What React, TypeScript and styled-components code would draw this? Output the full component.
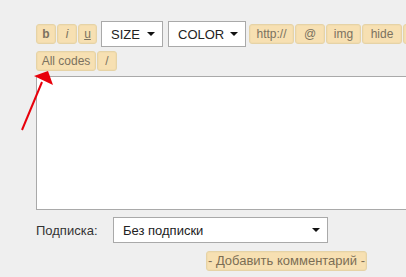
import React from 'react'
import styled, { createGlobalStyle } from 'styled-components'

const GlobalStyle = createGlobalStyle`
  html, body {
    margin: 0;
    padding: 0;
    background: #efefef;
    overflow: hidden;
  }
  body {
    font-family: "Liberation Sans", Arial, sans-serif;
  }
`

const Page = styled.div`
  position: relative;
  width: 406px;
  height: 277px;
  padding: 21px 0 0 36px;
  box-sizing: border-box;
  overflow: hidden;
`

const Toolbar = styled.div`
  display: flex;
  align-items: center;
  gap: 1px;
  width: 420px;
  height: 26px;
`

const CodesRow = styled.div`
  display: flex;
  align-items: center;
  gap: 1px;
  margin-top: 4px;
`

const TagButton = styled.button<{ $w: number; $bold?: boolean; $italic?: boolean; $under?: boolean }>`
  width: ${({ $w }) => $w}px;
  height: 20px;
  flex: none;
  padding: 0;
  background: #f7e0b2;
  border: 1px solid #e6d3a6;
  box-shadow: inset 0 0 0 1px #f2dcae;
  border-radius: 3px;
  color: #7b7260;
  font-family: "Liberation Sans", Arial, sans-serif;
  font-size: 12px;
  line-height: 18px;
  font-weight: ${({ $bold }) => ($bold ? 'bold' : 'normal')};
  font-style: ${({ $italic }) => ($italic ? 'italic' : 'normal')};
  text-decoration: ${({ $under }) => ($under ? 'underline' : 'none')};
  text-align: center;
  cursor: pointer;
`

const FakeSelect = styled.div<{ $w: number; $ml?: number }>`
  width: ${({ $w }) => $w}px;
  height: 26px;
  flex: none;
  margin: 0 2px 0 ${({ $ml }) => $ml ?? 3}px;
  box-sizing: border-box;
  background: #fff;
  border: 1px solid #a9a9a9;
  display: flex;
  align-items: center;
  justify-content: space-between;
  padding: 0 7px 0 9px;
  color: #222;
  font-size: 13px;
`

const Caret = styled.span`
  width: 0;
  height: 0;
  border-left: 4px solid transparent;
  border-right: 4px solid transparent;
  border-top: 4px solid #111;
`

const TextArea = styled.textarea`
  display: block;
  width: 420px;
  height: 134px;
  margin-top: 5px;
  box-sizing: border-box;
  background: #fff;
  border: 1px solid #a9a9a9;
  resize: none;
  outline: none;
`

const SubscribeRow = styled.div`
  display: flex;
  align-items: center;
  margin-top: 7px;
`

const Label = styled.span`
  width: 77px;
  color: #333;
  font-size: 13px;
`

const SubmitRow = styled.div`
  display: flex;
  padding-left: 170px;
  margin-top: 8px;
`

const SubmitButton = styled.button`
  width: 161px;
  height: 20px;
  padding: 0;
  background: #f7e0b2;
  border: 1px solid #e6d3a6;
  box-shadow: inset 0 0 0 1px #f2dcae;
  border-radius: 3px;
  color: #7b6e55;
  font-family: "Liberation Sans", Arial, sans-serif;
  font-size: 13px;
  line-height: 18px;
  cursor: pointer;
`

const Pointer = styled.svg`
  position: absolute;
  left: 0;
  top: 0;
  pointer-events: none;
`

export default function App() {
  return (
    <Page>
      <GlobalStyle />
      <Toolbar>
        <TagButton $w={20} $bold>b</TagButton>
        <TagButton $w={20} $italic>i</TagButton>
        <TagButton $w={19} $under>u</TagButton>
        <FakeSelect $w={62}>
          SIZE <Caret />
        </FakeSelect>
        <FakeSelect $w={78} $ml={2}>
          COLOR <Caret />
        </FakeSelect>
        <TagButton $w={45}>http://</TagButton>
        <TagButton $w={30}>@</TagButton>
        <TagButton $w={35}>img</TagButton>
        <TagButton $w={40}>hide</TagButton>
        <TagButton $w={30} aria-label="quote" />
      </Toolbar>
      <CodesRow>
        <TagButton $w={60}>All codes</TagButton>
        <TagButton $w={20}>/</TagButton>
      </CodesRow>
      <TextArea />
      <SubscribeRow>
        <Label>Подписка:</Label>
        <FakeSelect $w={215} $ml={0}>
          Без подписки <Caret />
        </FakeSelect>
      </SubscribeRow>
      <SubmitRow>
        <SubmitButton>- Добавить комментарий -</SubmitButton>
      </SubmitRow>
      <Pointer width="406" height="277" viewBox="0 0 406 277">
        <line x1="22" y1="130" x2="42" y2="82" stroke="#e8000b" strokeWidth="2" />
        <polygon points="34,76 48,71 53,85" fill="#e8000b" />
      </Pointer>
    </Page>
  )
}
